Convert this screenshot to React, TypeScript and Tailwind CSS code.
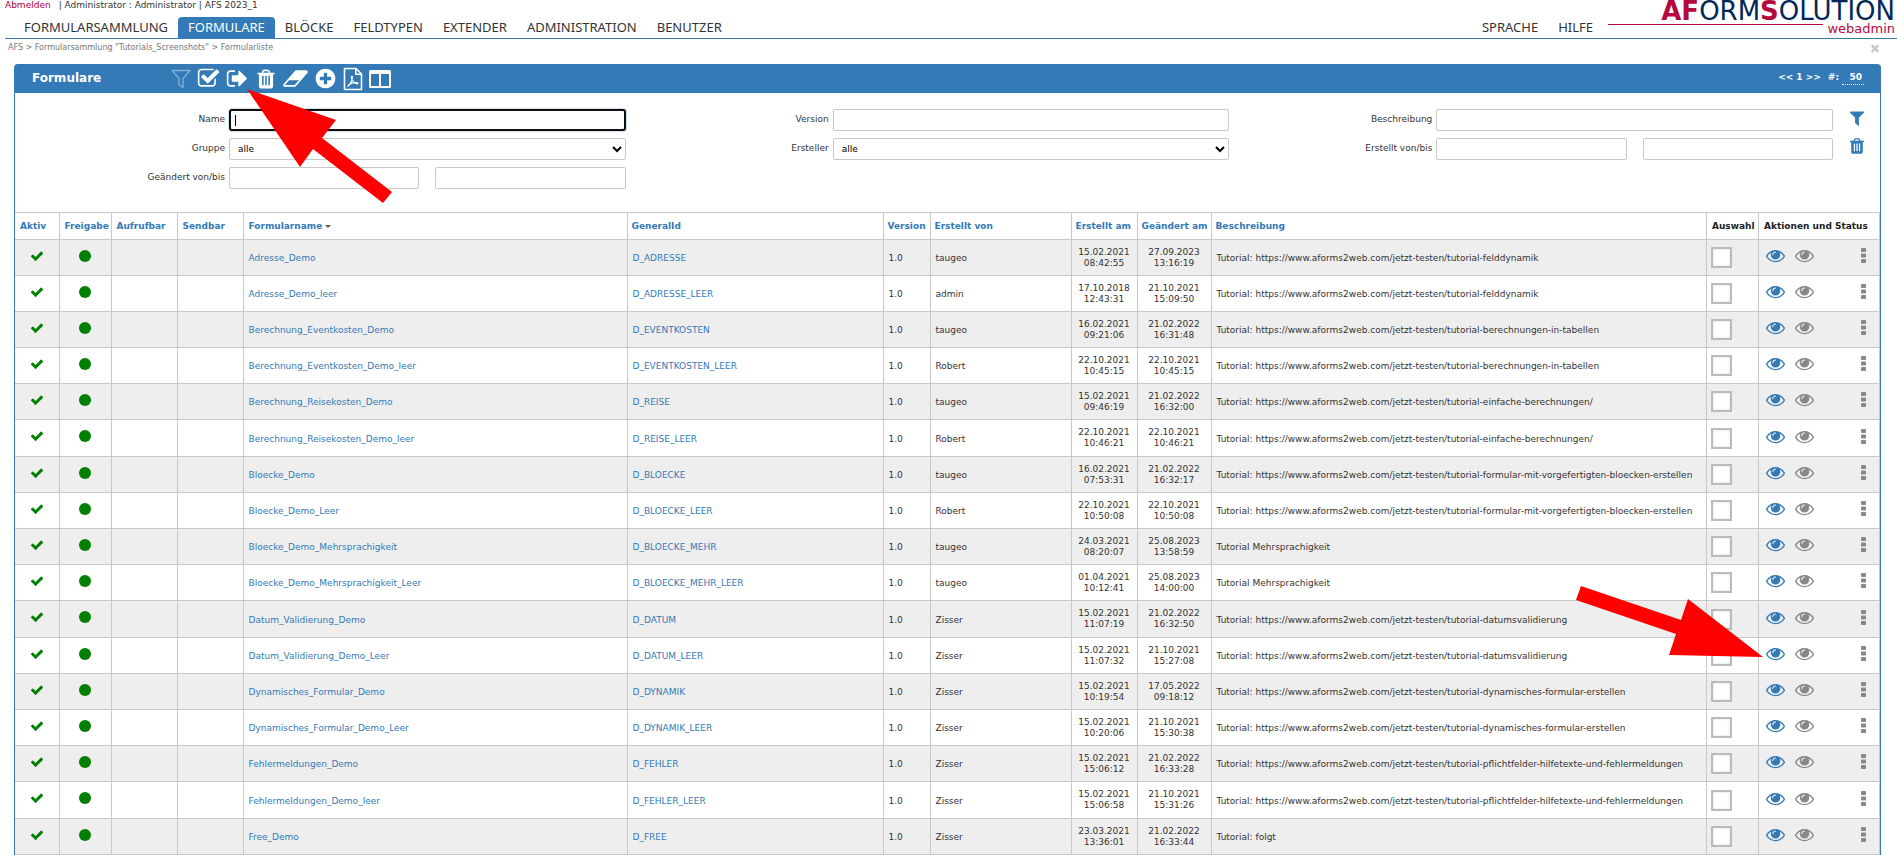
import React from 'react';

type IconProps = { d: string; className?: string; viewBox?: string };

const Icon = ({ d, className = 'size-[18px]', viewBox = '0 0 1792 1792' }: IconProps) => (
  <svg viewBox={viewBox} className={`shrink-0 fill-current ${className}`} aria-hidden="true">
    <path d={d} />
  </svg>
);

const EYE =
  'M1664 960q-152-236-381-353 61 104 61 225 0 185-131.5 316.5t-316.5 131.5-316.5-131.5-131.5-316.5q0-121 61-225-229 117-381 353 133 205 333.5 326.5t434.5 121.5 434.5-121.5 333.5-326.5zm-720-384q0-20-14-34t-34-14q-125 0-214.5 89.5t-89.5 214.5q0 20 14 34t34 14 34-14 14-34q0-86 61-147t147-61q20 0 34-14t14-34zm848 384q0 34-20 69-140 230-376.5 368.5t-499.5 138.5-499.5-139-376.5-368q-20-35-20-69t20-69q140-229 376.5-368t499.5-139 499.5 139 376.5 368q20 35 20 69z';
const TRASH =
  'M704 1376v-704q0-14-9-23t-23-9h-64q-14 0-23 9t-9 23v704q0 14 9 23t23 9h64q14 0 23-9t9-23zm256 0v-704q0-14-9-23t-23-9h-64q-14 0-23 9t-9 23v704q0 14 9 23t23 9h64q14 0 23-9t9-23zm256 0v-704q0-14-9-23t-23-9h-64q-14 0-23 9t-9 23v704q0 14 9 23t23 9h64q14 0 23-9t9-23zm-544-992h448l-48-117q-7-9-17-11h-317q-10 2-17 11zm928 32v64q0 14-9 23t-23 9h-96v948q0 83-47 143.5t-113 60.5h-832q-66 0-113-58.5t-47-141.5v-952h-96q-14 0-23-9t-9-23v-64q0-14 9-23t23-9h309l70-167q15-37 54-63t79-26h320q40 0 79 26t54 63l70 167h309q14 0 23 9t9 23z';
const FILTER =
  'M1595 295q17 41-14 70l-493 493v742q0 42-39 59-13 5-25 5-27 0-45-19l-256-256q-19-19-19-45v-486l-493-493q-31-29-14-70 17-39 59-39h1280q42 0 59 39z';
const PLUS =
  'M1344 960v-128q0-26-19-45t-45-19h-256v-256q0-26-19-45t-45-19h-128q-26 0-45 19t-19 45v256h-256q-26 0-45 19t-19 45v128q0 26 19 45t45 19h256v256q0 26 19 45t45 19h128q26 0 45-19t19-45v-256h256q26 0 45-19t19-45zm320-64q0 209-103 385.5t-279.5 279.5-385.5 103-385.5-103-279.5-279.5-103-385.5 103-385.5 279.5-279.5 385.5-103 385.5 103 279.5 279.5 103 385.5z';
const CHECK_SQUARE =
  'M1472 930v318q0 119-84.5 203.5t-203.5 84.5h-832q-119 0-203.5-84.5t-84.5-203.5v-832q0-119 84.5-203.5t203.5-84.5h832q63 0 117 25 15 7 18 23 3 17-9 29l-49 49q-10 10-23 10-3 0-9-2-23-6-45-6h-832q-66 0-113 47t-47 113v832q0 66 47 113t113 47h832q66 0 113-47t47-113v-254q0-13 9-22l64-64q10-10 23-10 6 0 12 3 20 8 20 29zm231-489l-814 814q-24 24-57 24t-57-24l-430-430q-24-24-24-57t24-57l110-110q24-24 57-24t57 24l263 263 647-647q24-24 57-24t57 24l110 110q24 24 24 57t-24 57z';
const SIGN_OUT =
  'M704 1440q0 4 1 20t.5 26.5-3 23.5-10 19.5-20.5 6.5h-320q-119 0-203.5-84.5t-84.5-203.5v-704q0-119 84.5-203.5t203.5-84.5h320q13 0 22.5 9.5t9.5 22.5q0 4 1 20t.5 26.5-3 23.5-10 19.5-20.5 6.5h-320q-66 0-113 47t-47 113v704q0 66 47 113t113 47h312l11.5 1 11.5 3 8 5.5 7 9 2 13.5zm928-544q0 26-19 45l-544 544q-19 19-45 19t-45-19-19-45v-288h-448q-26 0-45-19t-19-45v-384q0-26 19-45t45-19h448v-288q0-26 19-45t45-19 45 19l544 544q19 19 19 45z';
const ERASER =
  'M896 1408l336-384h-768l-336 384h768zm1013-1077q15 34 9.5 71.5t-30.5 65.5l-896 1024q-38 44-96 44h-768q-38 0-69.5-20.5t-47.5-54.5q-15-34-9.5-71.5t30.5-65.5l896-1024q38-44 96-44h768q38 0 69.5 20.5t47.5 54.5z';
const CHECK =
  'M1671 566q0 40-28 68l-724 724-136 136q-28 28-68 28t-68-28l-136-136-362-362q-28-28-28-68t28-68l136-136q28-28 68-28t68 28l294 295 656-657q28-28 68-28t68 28l136 136q28 28 28 68z';
const TIMES =
  'M1490 1322q0 40-28 68l-136 136q-28 28-68 28t-68-28l-294-294-294 294q-28 28-68 28t-68-28l-136-136q-28-28-28-68t28-68l294-294-294-294q-28-28-28-68t28-68l136-136q28-28 68-28t68 28l294 294 294-294q28-28 68-28t68 28l136 136q28 28 28 68t-28 68l-294 294 294 294q28 28 28 68z';

const DotsIcon = () => (
  <svg viewBox="0 0 5 15" className="h-[15px] w-[5px] shrink-0 fill-current" aria-hidden="true">
    <rect width="5" height="4" rx="0.8" />
    <rect y="5.500" width="5" height="4" rx="0.8" />
    <rect y="11" width="5" height="4" rx="0.8" />
  </svg>
);

const PdfIcon = () => (
  <svg viewBox="0 0 20 24" className="h-6 w-5 shrink-0" fill="none" stroke="currentColor" strokeWidth="1.6" strokeLinejoin="round" aria-hidden="true">
    <path d="M1.5 1.5H13l5.5 5.5v15.5h-17z" />
    <path d="M12.8 1.5v5.7h5.7" />
    <path strokeWidth="1.2" d="M4.5 19.5c2-1.200 4.600-5.500 5-9 .1-1.500-1.300-1.500-1.200 0 .2 2.600 3.200 5.800 5.500 6.300 1.600.2 1.600-1 0-1.100-2.600-.2-6 .6-8.400 2.200" />
  </svg>
);

const ColumnsIcon = () => (
  <svg viewBox="0 0 22 18" className="h-[18px] w-[22px] shrink-0 fill-current" aria-hidden="true">
    <path fillRule="evenodd" d="M1.500 0h19A1.500 1.500 0 0 1 22 1.500v15a1.500 1.500 0 0 1-1.500 1.500h-19A1.500 1.500 0 0 1 0 16.500v-15A1.500 1.500 0 0 1 1.500 0zM2 4v12h8V4zm10 0v12h8V4z" />
  </svg>
);

const tools: { label: string; icon: React.ReactNode }[] = [
  {
    label: 'Filter',
    icon: (
      <svg viewBox="0 0 20 20" className="size-5 fill-none stroke-current opacity-40" strokeWidth="1.3" aria-hidden="true">
        <path d="M1 1.500h18L12 9.500v9l-4-3v-6z" strokeLinejoin="round" />
      </svg>
    ),
  },
  { label: 'Auswählen', icon: <Icon d={CHECK_SQUARE} className="size-[23px]" /> },
  { label: 'Exportieren', icon: <Icon d={SIGN_OUT} className="size-[23px]" /> },
  { label: 'Löschen', icon: <Icon d={TRASH} className="size-[22px]" /> },
  { label: 'Leeren', icon: <Icon d={ERASER} viewBox="0 0 1920 1792" className="h-[23px] w-[25px]" /> },
  { label: 'Neu', icon: <Icon d={PLUS} className="size-[23px]" /> },
  { label: 'PDF', icon: <PdfIcon /> },
  { label: 'Spalten', icon: <ColumnsIcon /> },
];

const BASE = 'Tutorial: https://www.aforms2web.com/jetzt-testen/tutorial-';

const rows: [string, string, string, string, string, string][] = [
  ['Adresse_Demo', 'D_ADRESSE', 'taugeo', '15.02.2021 08:42:55', '27.09.2023 13:16:19', BASE + 'felddynamik'],
  ['Adresse_Demo_leer', 'D_ADRESSE_LEER', 'admin', '17.10.2018 12:43:31', '21.10.2021 15:09:50', BASE + 'felddynamik'],
  ['Berechnung_Eventkosten_Demo', 'D_EVENTKOSTEN', 'taugeo', '16.02.2021 09:21:06', '21.02.2022 16:31:48', BASE + 'berechnungen-in-tabellen'],
  ['Berechnung_Eventkosten_Demo_leer', 'D_EVENTKOSTEN_LEER', 'Robert', '22.10.2021 10:45:15', '22.10.2021 10:45:15', BASE + 'berechnungen-in-tabellen'],
  ['Berechnung_Reisekosten_Demo', 'D_REISE', 'taugeo', '15.02.2021 09:46:19', '21.02.2022 16:32:00', BASE + 'einfache-berechnungen/'],
  ['Berechnung_Reisekosten_Demo_leer', 'D_REISE_LEER', 'Robert', '22.10.2021 10:46:21', '22.10.2021 10:46:21', BASE + 'einfache-berechnungen/'],
  ['Bloecke_Demo', 'D_BLOECKE', 'taugeo', '16.02.2021 07:53:31', '21.02.2022 16:32:17', BASE + 'formular-mit-vorgefertigten-bloecken-erstellen'],
  ['Bloecke_Demo_Leer', 'D_BLOECKE_LEER', 'Robert', '22.10.2021 10:50:08', '22.10.2021 10:50:08', BASE + 'formular-mit-vorgefertigten-bloecken-erstellen'],
  ['Bloecke_Demo_Mehrsprachigkeit', 'D_BLOECKE_MEHR', 'taugeo', '24.03.2021 08:20:07', '25.08.2023 13:58:59', 'Tutorial Mehrsprachigkeit'],
  ['Bloecke_Demo_Mehrsprachigkeit_Leer', 'D_BLOECKE_MEHR_LEER', 'taugeo', '01.04.2021 10:12:41', '25.08.2023 14:00:00', 'Tutorial Mehrsprachigkeit'],
  ['Datum_Validierung_Demo', 'D_DATUM', 'Zisser', '15.02.2021 11:07:19', '21.02.2022 16:32:50', BASE + 'datumsvalidierung'],
  ['Datum_Validierung_Demo_Leer', 'D_DATUM_LEER', 'Zisser', '15.02.2021 11:07:32', '21.10.2021 15:27:08', BASE + 'datumsvalidierung'],
  ['Dynamisches_Formular_Demo', 'D_DYNAMIK', 'Zisser', '15.02.2021 10:19:54', '17.05.2022 09:18:12', BASE + 'dynamisches-formular-erstellen'],
  ['Dynamisches_Formular_Demo_Leer', 'D_DYNAMIK_LEER', 'Zisser', '15.02.2021 10:20:06', '21.10.2021 15:30:38', BASE + 'dynamisches-formular-erstellen'],
  ['Fehlermeldungen_Demo', 'D_FEHLER', 'Zisser', '15.02.2021 15:06:12', '21.02.2022 16:33:28', BASE + 'pflichtfelder-hilfetexte-und-fehlermeldungen'],
  ['Fehlermeldungen_Demo_leer', 'D_FEHLER_LEER', 'Zisser', '15.02.2021 15:06:58', '21.10.2021 15:31:26', BASE + 'pflichtfelder-hilfetexte-und-fehlermeldungen'],
  ['Free_Demo', 'D_FREE', 'Zisser', '23.03.2021 13:36:01', '21.02.2022 16:33:44', 'Tutorial: folgt'],
];

const field = 'h-[22px] w-full min-w-0 rounded-[2px] border border-[#c8c8c8] bg-white px-1 text-black outline-none';

const Field = ({ id, label, children }: { id: string; label: string; children: React.ReactNode }) => (
  <div className="grid grid-cols-[203px_1fr] items-center gap-1">
    <label htmlFor={id} className="pb-0.5 text-right">
      {label}
    </label>
    {children}
  </div>
);

const Range = ({ id, label }: { id: string; label: string }) => (
  <div className="grid grid-cols-2 gap-4">
    <input id={id} type="text" className={field} />
    <input type="text" aria-label={`${label} (bis)`} className={field} />
  </div>
);

const NavItem = ({ children, active = false }: { children: React.ReactNode; active?: boolean }) => (
  <a
    href="#"
    className={
      active
        ? 'flex h-[21px] items-center rounded-t bg-[#337ab7] px-2.5 text-white'
        : 'flex h-[21px] items-center px-2.5'
    }
  >
    {children}
  </a>
);

const cell = 'border border-[#c8c8c8] px-[5px]';

export default function App() {
  return (
    <div className="relative bg-white font-['DejaVu_Sans',Verdana,sans-serif] text-[9px] leading-[11px] text-[#333]">
      <header className="ml-[5px] flex justify-between border-b border-[#337ab7]">
        <div>
          <div className="flex h-[17px] gap-2 whitespace-pre">
            <a href="#" className="text-[#b0003a]">
              Abmelden
            </a>
            <span>| Administrator : Administrator | AFS 2023_1</span>
          </div>
          <nav className="flex pl-[9px] font-['Noto_Sans',sans-serif] text-[13px]">
            <NavItem>FORMULARSAMMLUNG</NavItem>
            <NavItem active>FORMULARE</NavItem>
            <NavItem>BLÖCKE</NavItem>
            <NavItem>FELDTYPEN</NavItem>
            <NavItem>EXTENDER</NavItem>
            <NavItem>ADMINISTRATION</NavItem>
            <NavItem>BENUTZER</NavItem>
          </nav>
        </div>
        <div className="flex items-end">
          <nav className="flex font-['Noto_Sans',sans-serif] text-[13px]">
            <NavItem>SPRACHE</NavItem>
            <NavItem>HILFE</NavItem>
          </nav>
          <div className="ml-[5px] flex h-[38px] w-[289px] flex-col items-end pr-0.5 text-[#00285a]">
            <div className="h-[23px] text-[26px] leading-[23px] whitespace-nowrap">
              <span className="font-bold text-[#b5093e]">AF</span>ORM<span className="font-bold text-[#b5093e]">S</span>OLUTION
            </div>
            <div className="flex w-full items-start gap-1 text-[13px] leading-[13px] text-[#b5093e]">
              <span className="mt-px h-px flex-1 bg-[#b5093e]" />
              <span className="-mt-px">webadmin</span>
            </div>
          </div>
        </div>
      </header>

      <div className="flex h-[25px] items-start justify-between pt-[3px] pr-4 pl-2 text-[#777]">
        <div className="text-[8px]">AFS &gt; Formularsammlung "Tutorials_Screenshots" &gt; Formularliste</div>
        <button type="button" aria-label="Schließen" className="text-[#c8c8c8]">
          <Icon d={TIMES} className="size-3" />
        </button>
      </div>

      <main className="mr-4 ml-3.5">
        <div className="flex h-[29px] items-center justify-between rounded-t bg-[#337ab7] pr-[17px] pl-[18px] font-bold text-white">
          <div className="flex items-center">
            <h1 className="w-[139px] text-[12px]">Formulare</h1>
            <div className="flex items-center gap-1.5">
              {tools.map((t) => (
                <button key={t.label} type="button" aria-label={t.label}>
                  {t.icon}
                </button>
              ))}
            </div>
          </div>
          <div className="flex items-center gap-[7px] pb-0.5">
            <span>&lt;&lt; 1 &gt;&gt;</span>
            <label htmlFor="count">#:</label>
            <input
              id="count"
              type="text"
              defaultValue="50"
              className="-ml-1 h-[14px] w-[22px] border-b border-dotted border-white bg-transparent pr-0.5 text-right outline-none"
            />
          </div>
        </div>

        <div className="border-x border-[#337ab7]">
          <form className="flex pt-4 pb-[23px] pl-[7px]">
            <div className="grid flex-1 grid-cols-3 gap-y-[7px]">
              <Field id="name" label="Name">
                <div className="relative">
                  <input
                    id="name"
                    type="text"
                    className="block h-[22px] w-full min-w-0 rounded-[3px] border-2 border-[#101010] bg-white px-1 text-black shadow-[0_0_0_1px_#cfe0f0] outline-none"
                  />
                  <span className="pointer-events-none absolute top-1.5 left-1.5 h-[11px] w-px bg-black" />
                </div>
              </Field>
              <Field id="version" label="Version">
                <input id="version" type="text" className={field} />
              </Field>
              <Field id="beschreibung" label="Beschreibung">
                <input id="beschreibung" type="text" className={field} />
              </Field>
              <Field id="gruppe" label="Gruppe">
                <select id="gruppe" className={field}>
                  <option>alle</option>
                </select>
              </Field>
              <Field id="ersteller" label="Ersteller">
                <select id="ersteller" className={field}>
                  <option>alle</option>
                </select>
              </Field>
              <Field id="erstellt" label="Erstellt von/bis">
                <Range id="erstellt" label="Erstellt" />
              </Field>
              <Field id="geaendert" label="Geändert von/bis">
                <Range id="geaendert" label="Geändert" />
              </Field>
            </div>
            <div className="flex w-[47px] flex-col items-center gap-2.5 text-[#337ab7]">
              <button type="submit" aria-label="Filtern">
                <Icon d={FILTER} />
              </button>
              <button type="reset" aria-label="Filter löschen">
                <Icon d={TRASH} />
              </button>
            </div>
          </form>

          <table className="w-full table-fixed border-collapse">
            <colgroup>
              <col className="w-11" />
              <col className="w-[52px]" />
              <col className="w-[66px]" />
              <col className="w-[66px]" />
              <col className="w-96" />
              <col className="w-64" />
              <col className="w-[47px]" />
              <col className="w-[141px]" />
              <col className="w-[66px]" />
              <col className="w-[74px]" />
              <col />
              <col className="w-[52px]" />
              <col className="w-[121px]" />
            </colgroup>
            <thead>
              <tr className="h-[27px] text-left whitespace-nowrap text-[#337ab7]">
                {['Aktiv', 'Freigabe', 'Aufrufbar', 'Sendbar'].map((h) => (
                  <th key={h} className={`${cell} first:border-l-0`}>
                    <a href="#">{h}</a>
                  </th>
                ))}
                <th className={cell}>
                  <a href="#" className="flex items-center gap-[3px]">
                    Formularname
                    <span className="border-x-[3px] border-t-[3px] border-x-transparent border-t-[#555]" />
                  </a>
                </th>
                {['GeneralId', 'Version', 'Erstellt von', 'Erstellt am', 'Geändert am', 'Beschreibung'].map((h) => (
                  <th key={h} className="border border-[#c8c8c8] px-1">
                    <a href="#">{h}</a>
                  </th>
                ))}
                <th className={`${cell} text-[#222]`}>Auswahl</th>
                <th className={`${cell} text-[#222]`}>Aktionen und Status</th>
              </tr>
            </thead>
            <tbody>
              {rows.map(([name, id, by, created, changed, text]) => (
                <tr key={name} className="h-9 odd:bg-[#eee] nth-[5n+6]:h-[37px]">
                  <td className={`${cell} border-l-0 pb-1`}>
                    <Icon d={CHECK} className="mx-auto size-[14px] text-[#008000]" />
                  </td>
                  <td className={`${cell} pb-1`}>
                    <span className="mx-auto block size-3 rounded-full bg-[#008000]" />
                  </td>
                  <td className={cell} />
                  <td className={cell} />
                  <td className={`${cell} pt-0.5 text-[#337ab7]`}>
                    <a href="#">{name}</a>
                  </td>
                  <td className={`${cell} pt-0.5 text-[#337ab7]`}>
                    <a href="#">{id}</a>
                  </td>
                  <td className={`${cell} pt-0.5`}>1.0</td>
                  <td className={`${cell} pt-0.5`}>{by}</td>
                  <td className={`${cell} text-center`}>{created}</td>
                  <td className={`${cell} text-center`}>{changed}</td>
                  <td className={`${cell} pt-0.5`}>{text}</td>
                  <td className="border border-[#c8c8c8] px-1">
                    <input
                      type="checkbox"
                      aria-label={`${name} auswählen`}
                      className="block size-[21px] appearance-none border-2 border-[#bbb] bg-white shadow-[inset_0_0_2px_#ccc]"
                    />
                  </td>
                  <td className="border border-[#c8c8c8] pr-[13px] pb-1 pl-[7px]">
                    <div className="flex items-center gap-2.5">
                      <a href="#" aria-label="Anzeigen" className="text-[#337ab7]">
                        <Icon d={EYE} className="size-[19px]" />
                      </a>
                      <a href="#" aria-label="Vorschau" className="text-[#888]">
                        <Icon d={EYE} className="size-[19px]" />
                      </a>
                      <button type="button" aria-label="Weitere Aktionen" className="ml-auto text-[#888]">
                        <DotsIcon />
                      </button>
                    </div>
                  </td>
                </tr>
              ))}
            </tbody>
          </table>
        </div>
      </main>

      <svg viewBox="0 0 146 115" className="pointer-events-none absolute top-[89px] left-[247px] h-[115px] w-[146px] fill-[#f00]" aria-hidden="true">
        <polygon points="0,0 89,31 75,49 145,103 136,114 66,60 53,78" />
      </svg>
      <svg viewBox="0 0 187 72" className="pointer-events-none absolute top-[586px] right-[134px] h-[72px] w-[187px] fill-[#f00]" aria-hidden="true">
        <polygon points="5,0 105,34 112,13 187,71 93,69 100,48 0,14" />
      </svg>
    </div>
  );
}
